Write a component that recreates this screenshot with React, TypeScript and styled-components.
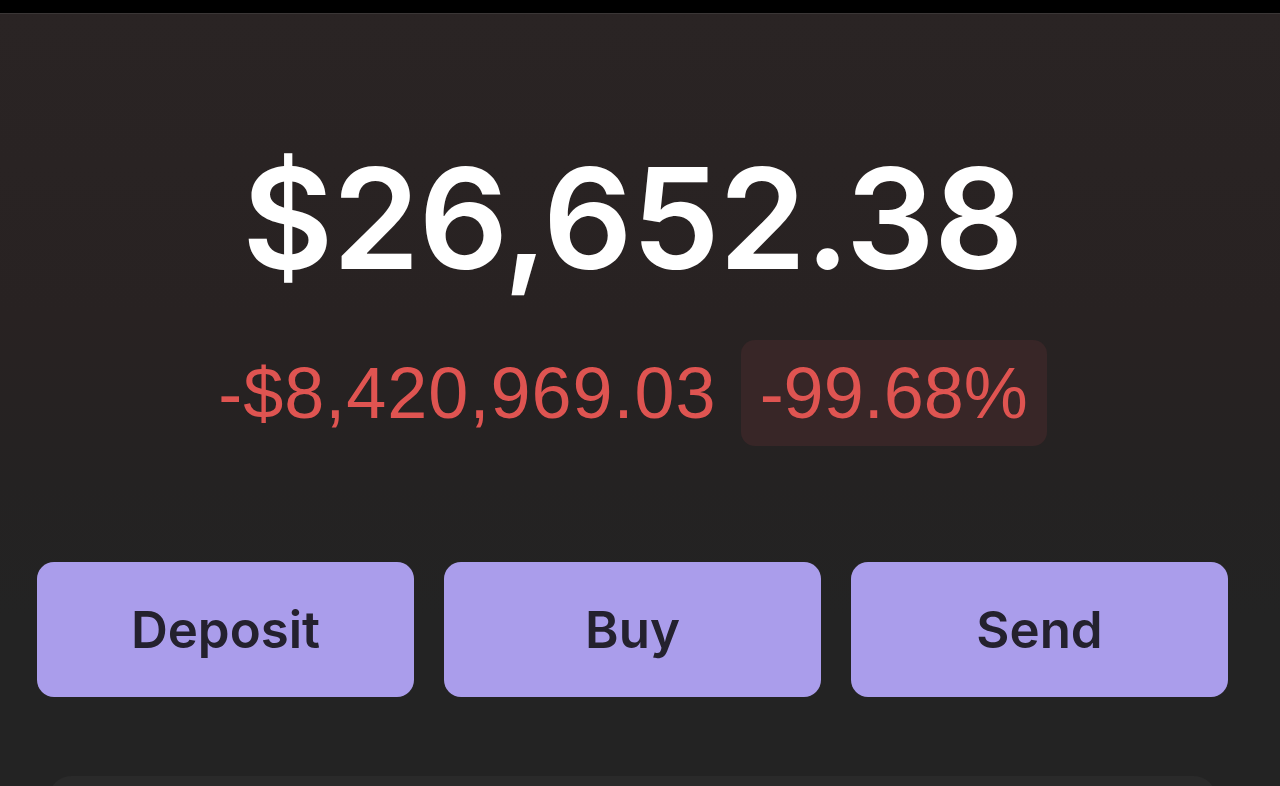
import styled, { createGlobalStyle } from 'styled-components'

const GlobalStyle = createGlobalStyle`
  html, body {
    margin: 0;
    padding: 0;
    background: #000;
  }
  body {
    font-family: Inter, "Liberation Sans", Arial, sans-serif;
    -webkit-font-smoothing: antialiased;
  }
`

const Screen = styled.div`
  box-sizing: border-box;
  width: 1280px;
  height: 786px;
  overflow: hidden;
  display: flex;
  flex-flow: column nowrap;
  background: #000;
  padding-top: 13px;
`

const Panel = styled.main`
  flex-grow: 1;
  display: flex;
  flex-flow: column nowrap;
  align-items: center;
  box-sizing: border-box;
  padding: 134px 52px 0 37px;
  border-top: 1px solid #3a3636;
  background: linear-gradient(180deg, #2a2424 0px, #282222 300px, #242222 470px, #232323 600px);
`

const Balance = styled.h1`
  margin: 0;
  font-family: Inter, "Liberation Sans", Arial, sans-serif;
  font-size: 140px;
  line-height: 140px;
  font-weight: 600;
  color: #ffffff;
  letter-spacing: -0.006em;
`

const ChangeRow = styled.div`
  display: flex;
  flex-flow: row nowrap;
  align-items: baseline;
  gap: 24px;
  margin-top: 52px;
  color: #df5451;
  font-family: "Liberation Sans", Arial, sans-serif;
`

const ChangeAmount = styled.span`
  font-size: 72px;
  line-height: 72px;
  letter-spacing: 1px;
`

const ChangeBadge = styled.span`
  display: inline-block;
  padding: 18px 19px;
  font-size: 72px;
  line-height: 70px;
  border-radius: 14px;
  background: #382627;
`

const Actions = styled.div`
  align-self: stretch;
  display: grid;
  grid-template-columns: repeat(3, 1fr);
  gap: 30px;
  margin-top: 116px;
`

const ActionButton = styled.button`
  height: 135px;
  border: none;
  border-radius: 17px;
  background: #aa9deb;
  color: #24212e;
  font-family: Inter, "Liberation Sans", Arial, sans-serif;
  font-size: 51px;
  font-weight: 600;
  cursor: pointer;
`

const Card = styled.section`
  align-self: stretch;
  height: 60px;
  margin: 79px 12px 0 12px;
  border-radius: 22px;
  background: #2a2a2a;
`

export default function App() {
  const actions = ['Deposit', 'Buy', 'Send']
  return (
    <>
      <GlobalStyle />
      <Screen>
        <Panel>
          <Balance>$26,652.38</Balance>
          <ChangeRow>
            <ChangeAmount>-$8,420,969.03</ChangeAmount>
            <ChangeBadge>-99.68%</ChangeBadge>
          </ChangeRow>
          <Actions>
            {actions.map(a => <ActionButton key={a}>{a}</ActionButton>)}
          </Actions>
          <Card />
        </Panel>
      </Screen>
    </>
  )
}
